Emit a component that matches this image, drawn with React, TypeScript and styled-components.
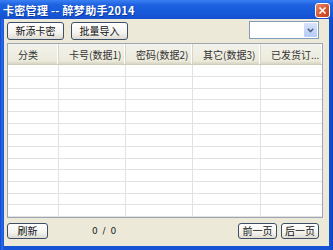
import React from "react";
import styled, { createGlobalStyle } from "styled-components";

const Global = createGlobalStyle`
  html, body { margin: 0; padding: 0; background: #ECE9D8; }
  body { font-family: "Noto Sans CJK SC", "Noto Sans", sans-serif; }
`;

const Window = styled.div`
  width: 333px;
  height: 250px;
  display: flex;
  flex-direction: column;
  overflow: hidden;
  background: linear-gradient(to right, #0A4AD0 0, #2E6BE6 2px, #1552D6 4px, #1552D6 329px, #0B45C4 333px);
`;

const TitleBar = styled.div`
  height: 19px;
  display: flex;
  align-items: center;
  justify-content: space-between;
  padding: 0 3px 0 3px;
  background: linear-gradient(to bottom, #3A80F3 0%, #1F62E0 25%, #175BDC 60%, #1450CF 100%);
`;

const Title = styled.span`
  color: #fff;
  font-size: 11px;
  font-weight: bold;
  letter-spacing: 0.3px;
  text-shadow: 1px 1px 0 #0B3A9E;
  white-space: pre;
`;

const CloseBtn = styled.div`
  width: 13px;
  height: 13px;
  border: 1px solid #fff;
  border-radius: 3px;
  background: linear-gradient(135deg, #E98A6C 0%, #D4532E 60%, #C23E1C 100%);
  display: flex;
  align-items: center;
  justify-content: center;
  margin-top: 1px;
`;

const Frame = styled.div`
  flex: 1;
  display: flex;
  flex-direction: column;
  margin: 0 4px 4px 4px;
  background: #ECE9D8;
  padding: 3px 6px 0 3px;
  min-height: 0;
`;

const Toolbar = styled.div`
  display: flex;
  align-items: flex-start;
  gap: 7px;
  height: 21px;
`;

const Button = styled.button<{ $w: number; $h: number }>`
  width: ${(p) => p.$w}px;
  height: ${(p) => p.$h}px;
  padding: 0;
  border: 1px solid #3D4F66;
  border-radius: 3px;
  background: linear-gradient(to bottom, #FFFFFF 0%, #F4F3EE 60%, #DDDBD2 100%);
  font-family: "Noto Sans CJK SC", sans-serif;
  font-size: 10px;
  line-height: 1;
  color: #111;
  display: flex;
  align-items: center;
  justify-content: center;
`;

const Spacer = styled.div`
  flex: 1;
`;

const Combo = styled.div`
  width: 66px;
  height: 14px;
  margin-top: -1px;
  margin-right: 4px;
  border: 1px solid #7F9DB9;
  background: #fff;
  display: flex;
  justify-content: flex-end;
  align-items: stretch;
  padding: 1px;
`;

const ComboArrow = styled.div`
  width: 13px;
  background: linear-gradient(to bottom, #D7E3FB, #B6CBF6);
  border-radius: 1px;
  display: flex;
  align-items: center;
  justify-content: center;
`;

const ListBox = styled.div`
  height: 173px;
  border: 1px solid #9DA6B2;
  background: #fff;
  display: flex;
  flex-direction: column;
  overflow: hidden;
`;

const cols = [51, 67, 67, 68, 62];

const HeaderRow = styled.div`
  display: flex;
  height: 21px;
  flex-shrink: 0;
  background: linear-gradient(to bottom, #F4F3EC 0%, #EBEADB 85%, #D8D4C4 100%);
  border-bottom: 1px solid #D0CCBC;
  box-sizing: border-box;
`;

const HeaderCell = styled.div<{ $w: number }>`
  width: ${(p) => p.$w}px;
  flex-shrink: 0;
  box-sizing: border-box;
  padding-left: 10px;
  display: flex;
  align-items: center;
  font-size: 10px;
  color: #333;
  white-space: nowrap;
  overflow: hidden;
  border-right: 1px solid #D8D5C8;
  box-shadow: inset -2px 0 0 -1px #fff;
`;

const Row = styled.div<{ $h: number }>`
  display: flex;
  height: ${(p) => p.$h}px;
  flex-shrink: 0;
  border-bottom: 1px solid #E2E2E2;
  box-sizing: border-box;
`;

const Cell = styled.div<{ $w: number }>`
  width: ${(p) => p.$w}px;
  flex-shrink: 0;
  box-sizing: border-box;
  border-right: 1px solid #E2E2E2;
`;

const BottomBar = styled.div`
  display: flex;
  align-items: center;
  margin-top: 5px;
  height: 16px;
`;

const Pager = styled.span`
  font-family: "DejaVu Sans", sans-serif;
  font-size: 9px;
  color: #222;
  margin-left: 44px;
  letter-spacing: 1px;
`;

const NavGroup = styled.div`
  margin-left: auto;
  display: flex;
  gap: 4px;
  margin-right: 4px;
`;

const headers = ["分类", "卡号(数据1)", "密码(数据2)", "其它(数据3)", "已发货订..."];
const rowHeights = [12, 12, 11, 12, 12, 11, 12, 12, 11, 12, 12, 11, 12, 12];

export default function App() {
  return (
    <>
      <Global />
      <Window>
        <TitleBar>
          <Title>卡密管理 -- 醉梦助手2014</Title>
          <CloseBtn>
            <svg width="9" height="9" viewBox="0 0 9 9">
              <path d="M1.5 1.5 L7.5 7.5 M7.5 1.5 L1.5 7.5" stroke="#fff" strokeWidth="1.6" />
            </svg>
          </CloseBtn>
        </TitleBar>
        <Frame>
          <Toolbar>
            <Button $w={57} $h={18}>新添卡密</Button>
            <Button $w={57} $h={18}>批量导入</Button>
            <Spacer />
            <Combo>
              <ComboArrow>
                <svg width="7" height="5" viewBox="0 0 7 5">
                  <path d="M0.8 0.8 L3.5 3.6 L6.2 0.8" stroke="#4D6185" strokeWidth="1.5" fill="none" />
                </svg>
              </ComboArrow>
            </Combo>
          </Toolbar>
          <ListBox>
            <HeaderRow>
              {headers.map((h, i) => (
                <HeaderCell key={i} $w={cols[i]}>{h}</HeaderCell>
              ))}
            </HeaderRow>
            {rowHeights.map((h, r) => (
              <Row key={r} $h={h}>
                {cols.map((w, i) => (
                  <Cell key={i} $w={w} />
                ))}
              </Row>
            ))}
          </ListBox>
          <BottomBar>
            <Button $w={41} $h={16}>刷新</Button>
            <Pager>0 / 0</Pager>
            <NavGroup>
              <Button $w={39} $h={16}>前一页</Button>
              <Button $w={38} $h={16}>后一页</Button>
            </NavGroup>
          </BottomBar>
        </Frame>
      </Window>
    </>
  );
}
